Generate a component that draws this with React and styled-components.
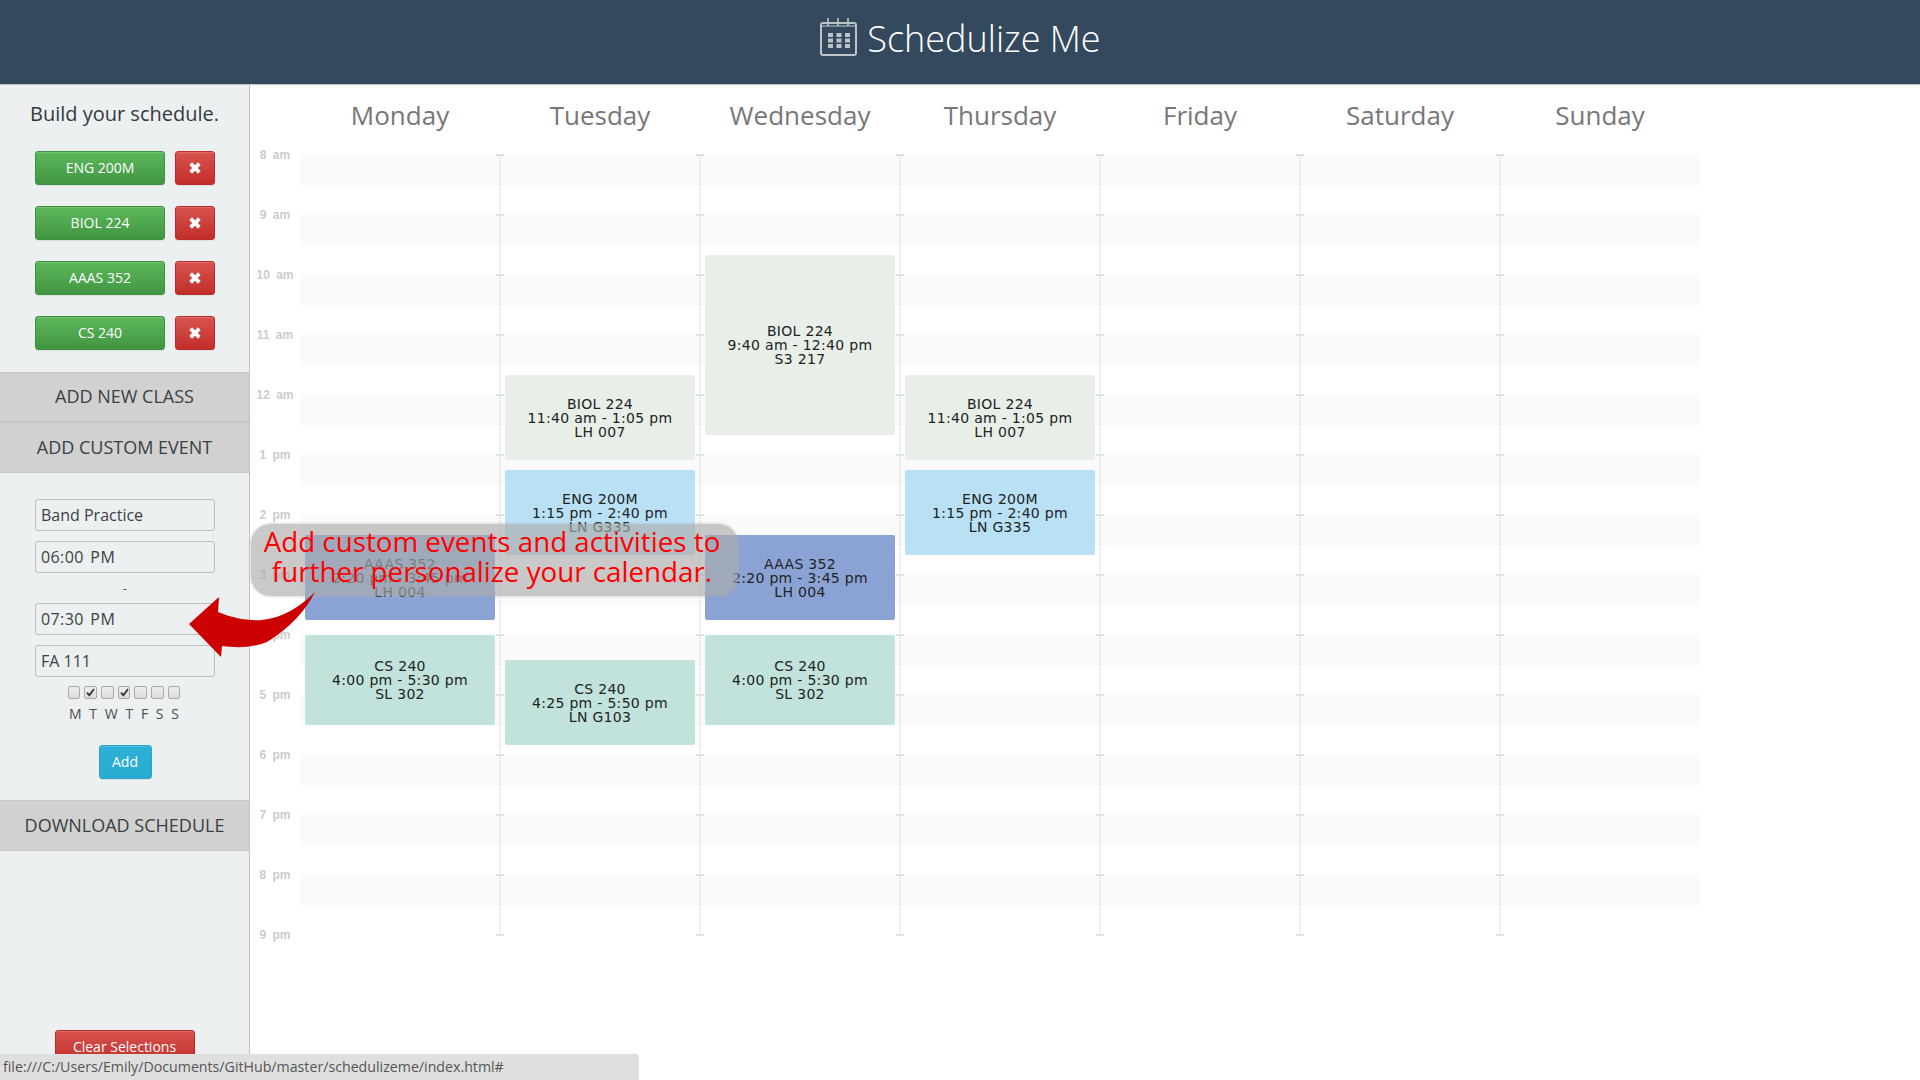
import React from 'react';
import styled, { createGlobalStyle } from 'styled-components';

const GlobalStyle = createGlobalStyle`
  html, body {
    margin: 0;
    padding: 0;
    height: 100%;
    overflow: hidden;
    background: #fff;
    font-family: "Open Sans", "Liberation Sans", sans-serif;
  }
  * { box-sizing: border-box; }
`;

const Page = styled.div`
  position: relative;
  width: 1920px;
  height: 1080px;
  overflow: hidden;
`;

const Header = styled.header`
  height: 85px;
  background: #34495e;
  border-bottom: 1px solid #bdc3c7;
  display: flex;
  align-items: flex-start;
  justify-content: center;
  gap: 9px;
  padding: 18px 0 0 1px;
`;

const Brand = styled.h1`
  margin: 0;
  font-size: 36px;
  font-weight: 300;
  line-height: 42px;
  color: #fff;
`;

const Body = styled.div`
  display: flex;
  height: 995px;
`;

const Sidebar = styled.aside`
  width: 250px;
  flex: none;
  background: #ecf0f1;
  border-right: 1px solid #bdc3c7;
  display: flex;
  flex-direction: column;
`;

const Title = styled.div`
  margin: 14px 0 22px;
  text-align: center;
  font-size: 20px;
  line-height: 30px;
  color: #34393d;
`;

const ClassList = styled.div`
  display: flex;
  flex-direction: column;
  gap: 21px;
  padding: 0 0 22px 35px;
`;

const ClassRow = styled.div`
  display: flex;
  gap: 10px;
`;

const Btn = styled.button`
  height: 34px;
  padding: 0;
  border: 1px solid ${p => p.$edge};
  border-radius: 3px;
  background: linear-gradient(to bottom, ${p => p.$from}, ${p => p.$to});
  color: #fff;
  font: 14px/20px "Open Sans", sans-serif;
  box-shadow: inset 0 1px 0 rgba(255, 255, 255, .15), 0 1px 1px rgba(0, 0, 0, .075);
  display: flex;
  align-items: center;
  justify-content: center;
  flex: none;
  width: ${p => p.$w}px;
`;

const PanelHead = styled.div`
  height: ${p => p.$h}px;
  flex: none;
  background: #d1d1d1;
  border-top: 1px solid #c6c6c6;
  border-bottom: 1px solid #c6c6c6;
  text-align: center;
  font-size: 18px;
  line-height: ${p => p.$h - 3}px;
  color: #3a3f42;
`;

const EventForm = styled.div`
  padding: 26px 34px 0 35px;
  display: flex;
  flex-direction: column;
  height: 327px;
`;

const Field = styled.input`
  width: 180px;
  height: 32px;
  flex: none;
  border: 1px solid #bbbfc0;
  border-radius: 3px;
  background: #ecf0f1;
  color: #3c4144;
  padding: 0 5px;
  font: 16px "Open Sans", sans-serif;
  word-spacing: ${p => p.$wide ? '2px' : '0'};
  letter-spacing: ${p => p.$wide ? '.4px' : '0'};
  margin-bottom: 10px;
  outline: none;
`;

const Dash = styled.div`
  height: 20px;
  line-height: 12px;
  text-align: center;
  font-size: 12px;
  color: #444;
`;

const Checks = styled.div`
  display: flex;
  justify-content: center;
  gap: 4.2px;
  margin-top: -1px;
  padding-right: 2px;
  height: 13px;
`;

const CheckBox = styled.span`
  width: 12.5px;
  height: 12.5px;
  flex: none;
  border: 1px solid #a9a9a9;
  border-radius: 2px;
  background: linear-gradient(to bottom, #eee, #dcdcdc);
  display: flex;
  align-items: center;
  justify-content: center;
`;

const DayLetters = styled.div`
  margin-top: 5px;
  padding-right: 2px;
  text-align: center;
  font-size: 14px;
  line-height: 20px;
  color: #4a4f52;
  word-spacing: 4.1px;
`;

const AddRow = styled.div`
  margin-top: 21px;
  display: flex;
  justify-content: center;
`;

const ClearRow = styled.div`
  margin-top: auto;
  padding-bottom: 16px;
  display: flex;
  justify-content: center;
`;

const Main = styled.main`
  flex: 1;
  min-width: 0;
`;

const DayRow = styled.div`
  display: flex;
  padding-left: 50px;
  height: 70px;
`;

const DayName = styled.div`
  width: 200px;
  text-align: center;
  font-size: 26px;
  line-height: 36px;
  padding-top: 12px;
  color: #777;
`;

const Calendar = styled.div`
  display: flex;
`;

const TimeAxis = styled.div`
  width: 50px;
  flex: none;
  margin-top: -8px;
`;

const TimeLabel = styled.div`
  height: 60px;
  text-align: center;
  font: bold 12px/16px "Liberation Sans", Arial, sans-serif;
  word-spacing: 3px;
  color: #ccc;
`;

const Grid = styled.div`
  width: 1400px;
  height: 780px;
  display: grid;
  grid-template-columns: repeat(7, 200px);
  background: repeating-linear-gradient(to bottom, #fafafa 0 30px, #fff 30px 60px);
`;

const Column = styled.div`
  position: relative;

  &:not(:first-child)::before {
    content: '';
    position: absolute;
    left: -4px;
    top: -1px;
    width: 8px;
    height: 782px;
    background-image:
      repeating-linear-gradient(to bottom, #dfe3e6 0 2px, transparent 2px 60px),
      repeating-linear-gradient(to bottom, #e4e4e4 0 1px, transparent 1px 2px);
    background-size: 8px 100%, 2px 100%;
    background-position: 0 0, 3px 0;
    background-repeat: no-repeat;
  }
`;

const Event = styled.div`
  position: absolute;
  left: 5px;
  right: 5px;
  top: ${p => p.$top}px;
  height: ${p => p.$height}px;
  background: ${p => p.$color};
  border-radius: 2px;
  display: flex;
  flex-direction: column;
  justify-content: center;
  text-align: center;
  font: 14px/14px "DejaVu Sans", Verdana, sans-serif;
  letter-spacing: .3px;
  color: #222;
`;

const Callout = styled.div`
  position: absolute;
  left: 251px;
  top: 524px;
  width: 487px;
  height: 72px;
  border-radius: 20px;
  background: rgba(172, 172, 172, .65);
  box-shadow: 0 0 3px rgba(172, 172, 172, .8);
  color: #f00;
  text-align: center;
  font-size: 27.75px;
  line-height: 30px;
  padding: 2px 5px 0 0;
  white-space: nowrap;
`;

const ArrowMark = styled.svg`
  position: absolute;
  left: 180px;
  top: 585px;
`;

const StatusBar = styled.div`
  position: absolute;
  left: 0;
  bottom: 0;
  width: 639px;
  height: 26px;
  background: #dfdfdf;
  border-top-right-radius: 3px;
  padding-left: 3px;
  font-size: 14.2px;
  line-height: 26px;
  color: #555;
  white-space: nowrap;
`;

const CalendarIcon = () => (
  <svg width="38" height="38" viewBox="0 0 38 38" fill="none" stroke="#bdc3c7">
    <rect x="1" y="5" width="35" height="32" rx="2" strokeWidth="2" />
    <path d="M8 0v8M18 0v8M28 0v8" strokeWidth="1.6" />
    <path d="M2 8h34" strokeWidth="1" />
    <path
      fill="#bdc3c7"
      stroke="none"
      d="M8 15h5v4H8zM16.5 15h5v4h-5zM25 15h5v4h-5zM8 20.5h5v4H8zM16.5 20.5h5v4h-5zM25 20.5h5v4h-5zM8 26h5v4H8zM16.5 26h5v4h-5zM25 26h5v4h-5z"
    />
  </svg>
);

const CrossIcon = () => (
  <svg width="12" height="12" viewBox="0 0 12 12">
    <path fill="#fff" d="M3 .3 6 3.2 9 .3 11.7 3 8.8 6l2.9 3L9 11.7 6 8.8l-3 2.9L.3 9l2.9-3L.3 3z" />
  </svg>
);

const CheckMark = () => (
  <svg width="9" height="9" viewBox="0 0 9 9">
    <path fill="none" stroke="#333" strokeWidth="1.8" d="M1 4.6 3.4 7.4 8 1" />
  </svg>
);

const classes = ['ENG 200M', 'BIOL 224', 'AAAS 352', 'CS 240'];
const days = ['Monday', 'Tuesday', 'Wednesday', 'Thursday', 'Friday', 'Saturday', 'Sunday'];
const hours = ['8 am', '9 am', '10 am', '11 am', '12 am', '1 pm', '2 pm', '3 pm', '4 pm', '5 pm', '6 pm', '7 pm', '8 pm', '9 pm'];
const checked = [false, true, false, true, false, false, false];

const BIOL = '#e8efe9';
const ENG = '#b8e1f6';
const AAAS = '#8ba3d4';
const CS = '#c1e3dc';

const schedule = [
  [
    { lines: ['AAAS 352', '2:20 pm - 3:45 pm', 'LH 004'], top: 380, height: 85, color: AAAS },
    { lines: ['CS 240', '4:00 pm - 5:30 pm', 'SL 302'], top: 480, height: 90, color: CS },
  ],
  [
    { lines: ['BIOL 224', '11:40 am - 1:05 pm', 'LH 007'], top: 220, height: 85, color: BIOL },
    { lines: ['ENG 200M', '1:15 pm - 2:40 pm', 'LN G335'], top: 315, height: 85, color: ENG },
    { lines: ['CS 240', '4:25 pm - 5:50 pm', 'LN G103'], top: 505, height: 85, color: CS },
  ],
  [
    { lines: ['BIOL 224', '9:40 am - 12:40 pm', 'S3 217'], top: 100, height: 180, color: BIOL },
    { lines: ['AAAS 352', '2:20 pm - 3:45 pm', 'LH 004'], top: 380, height: 85, color: AAAS },
    { lines: ['CS 240', '4:00 pm - 5:30 pm', 'SL 302'], top: 480, height: 90, color: CS },
  ],
  [
    { lines: ['BIOL 224', '11:40 am - 1:05 pm', 'LH 007'], top: 220, height: 85, color: BIOL },
    { lines: ['ENG 200M', '1:15 pm - 2:40 pm', 'LN G335'], top: 315, height: 85, color: ENG },
  ],
  [],
  [],
  [],
];

const green = { $from: '#5cb85c', $to: '#419641', $edge: '#3e8f3e' };
const red = { $from: '#d9534f', $to: '#c12e2a', $edge: '#b92c28' };
const blue = { $from: '#2eb0d6', $to: '#2aabd2', $edge: '#28a4c9' };

export default function App() {
  return (
    <Page>
      <GlobalStyle />
      <Header>
        <CalendarIcon />
        <Brand>Schedulize Me</Brand>
      </Header>
      <Body>
        <Sidebar>
          <Title>Build your schedule.</Title>
          <ClassList>
            {classes.map(name => (
              <ClassRow key={name}>
                <Btn {...green} $w={130}>{name}</Btn>
                <Btn {...red} $w={40}><CrossIcon /></Btn>
              </ClassRow>
            ))}
          </ClassList>
          <PanelHead $h={50}>ADD NEW CLASS</PanelHead>
          <PanelHead $h={51}>ADD CUSTOM EVENT</PanelHead>
          <EventForm>
            <Field readOnly defaultValue="Band Practice" />
            <Field readOnly $wide defaultValue="06:00 PM" />
            <Dash>-</Dash>
            <Field readOnly $wide defaultValue="07:30 PM" />
            <Field readOnly defaultValue="FA 111" />
            <Checks>
              {checked.map((on, i) => (
                <CheckBox key={i}>{on && <CheckMark />}</CheckBox>
              ))}
            </Checks>
            <DayLetters>M T W T F S S</DayLetters>
            <AddRow>
              <Btn {...blue} $w={53}>Add</Btn>
            </AddRow>
          </EventForm>
          <PanelHead $h={51}>DOWNLOAD SCHEDULE</PanelHead>
          <ClearRow>
            <Btn {...red} $w={140}>Clear Selections</Btn>
          </ClearRow>
        </Sidebar>
        <Main>
          <DayRow>
            {days.map(day => <DayName key={day}>{day}</DayName>)}
          </DayRow>
          <Calendar>
            <TimeAxis>
              {hours.map(h => <TimeLabel key={h}>{h}</TimeLabel>)}
            </TimeAxis>
            <Grid>
              {schedule.map((events, i) => (
                <Column key={i}>
                  {events.map(ev => (
                    <Event key={ev.lines[0]} $top={ev.top} $height={ev.height} $color={ev.color}>
                      {ev.lines.map(line => <div key={line}>{line}</div>)}
                    </Event>
                  ))}
                </Column>
              ))}
            </Grid>
          </Calendar>
        </Main>
      </Body>
      <Callout>
        Add custom events and activities to<br />further personalize your calendar.
      </Callout>
      <ArrowMark width="140" height="80" viewBox="180 585 140 80">
        <path
          fill="#cc0000"
          d="M189 624 219 597 218 612C232 618 248 621 262 620 282 618 300 607 315 592 306 610 290 628 267 642 252 648 236 648 222 646L221 657Z"
        />
      </ArrowMark>
      <StatusBar>file:///C:/Users/Emily/Documents/GitHub/master/schedulizeme/index.html#</StatusBar>
    </Page>
  );
}
